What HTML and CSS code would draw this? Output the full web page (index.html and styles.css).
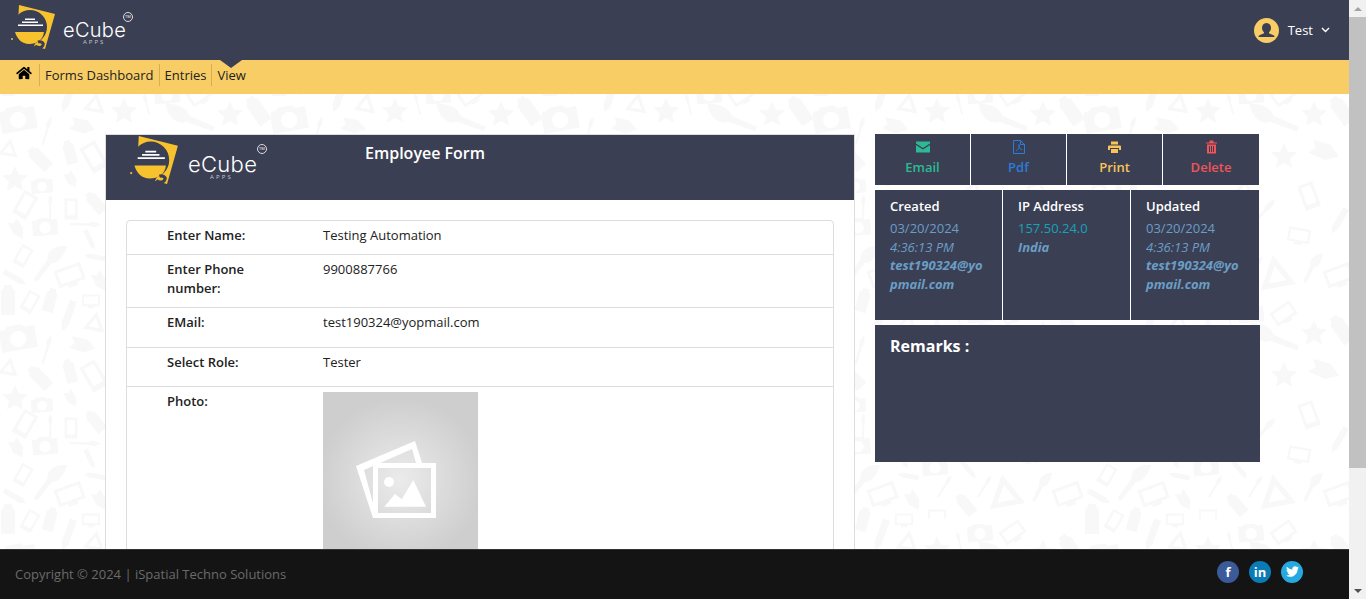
FILE: index.html
```html
<!DOCTYPE html>
<html>
<head>
  <title>eCube Apps - View Entry</title>
  <link rel="stylesheet" href="styles.css">
</head>
<body>
  <svg class="doodles" width="100%" height="100%" aria-hidden="true">
    <defs>
      <path id="d-camera" fill-rule="evenodd" d="M-18-10h6l3-3h14l3 3h10v22h-36zM0-7a8 8 0 1 0 .01 0z"/>
      <path id="d-brush" d="M-1.500 20L-1-2c-3-4-1-10 2-14 3 4 3 10 1 14L1.500 20z"/>
      <path id="d-bigbrush" d="M-3 20L-3-2c-5-5-2-15 8-20 2 10 3 16-3 21L1 20z"/>
      <path id="d-pencil" d="M-4-18h8v28l-4 8-4-8z"/>
      <path id="d-triangle" fill-rule="evenodd" d="M0-20L20 16H-20zM0-8L-10 10H10z"/>
      <path id="d-nib" d="M-14-7L4-8 16 0 4 8-14 7l5-7z"/>
      <path id="d-star" d="M0-13l3.800 8.500 9.200 1-6.900 6.200 2 9.100L0 7l-8.100 4.800 2-9.100L-13-3.500l9.200-1z"/>
      <path id="d-monitor" fill-rule="evenodd" d="M-14-10h28v18H-14zM-11-7v12h22V-7zM-5 8h10v3H-5z"/>
      <path id="d-phone" fill-rule="evenodd" d="M-8-13H8v26H-8zM-5-10v18H5v-18z"/>
      <path id="d-can" d="M-7-10l3-3v-3h8v3l3 3v24H-7z"/>
      <pattern id="doodle" width="271" height="219" patternUnits="userSpaceOnUse" patternTransform="translate(0 81)">
        <g fill="#f8f8f8">
          <use href="#d-camera" transform="translate(18 38) rotate(-10)"/>
          <use href="#d-brush" transform="translate(47 48) rotate(15) scale(.8)"/>
          <use href="#d-pencil" transform="translate(68 16) rotate(20) scale(.9)"/>
          <use href="#d-triangle" transform="translate(95 22) rotate(10) scale(.55)"/>
          <use href="#d-nib" transform="translate(82 45) rotate(15) scale(.85)"/>
          <use href="#d-star" transform="translate(124 30)"/>
          <use href="#d-brush" transform="translate(146 22) rotate(-15) scale(.6)"/>
          <use href="#d-bigbrush" transform="translate(190 38) rotate(-70) scale(1.300)"/>
          <use href="#d-star" transform="translate(230 33)"/>
          <use href="#d-can" transform="translate(258 30) rotate(-35)"/>
          <use href="#d-camera" transform="translate(167 14) rotate(-5) scale(.7)"/>
          <use href="#d-monitor" transform="translate(200 14) rotate(-35) scale(.85)"/>
          <use href="#d-triangle" transform="translate(9 67) rotate(10) scale(.5)"/>
          <use href="#d-can" transform="translate(40 78) rotate(-45) scale(.9)"/>
          <use href="#d-can" transform="translate(70 72) rotate(-15) scale(.8)"/>
          <use href="#d-phone" transform="translate(94 76) rotate(-30) scale(1.100)"/>
          <use href="#d-star" transform="translate(15 98)"/>
          <use href="#d-camera" transform="translate(42 105) rotate(-5) scale(.6)"/>
          <use href="#d-nib" transform="translate(71 98) rotate(60) scale(.6)"/>
          <use href="#d-phone" transform="translate(25 124) rotate(30)"/>
          <use href="#d-brush" transform="translate(50 125) scale(.7)"/>
          <use href="#d-phone" transform="translate(71 128) scale(.8)"/>
          <use href="#d-can" transform="translate(96 122) rotate(-40) scale(.8)"/>
          <use href="#d-nib" transform="translate(17 148) rotate(60) scale(.7)"/>
          <use href="#d-camera" transform="translate(45 146) rotate(-5) scale(.7)"/>
          <use href="#d-brush" transform="translate(87 143) rotate(90) scale(.85)"/>
          <use href="#d-pencil" transform="translate(90 159) rotate(-25) scale(.6)"/>
          <use href="#d-phone" transform="translate(23 175) rotate(30) scale(.8)"/>
          <use href="#d-bigbrush" transform="translate(49 182) rotate(35) scale(1.100)"/>
          <use href="#d-pencil" transform="translate(95 176) rotate(100) scale(.6)"/>
          <use href="#d-pencil" transform="translate(15 197) rotate(-60) scale(.7)"/>
          <use href="#d-monitor" transform="translate(70 195) rotate(-20)"/>
          <use href="#d-nib" transform="translate(100 200) rotate(60) scale(.7)"/>
          <use href="#d-can" transform="translate(8 220)"/>
          <use href="#d-can" transform="translate(8 1)"/>
          <use href="#d-phone" transform="translate(30 221) rotate(30) scale(.8)"/>
          <use href="#d-phone" transform="translate(30 2) rotate(30) scale(.8)"/>
          <use href="#d-can" transform="translate(50 220) rotate(15) scale(.8)"/>
          <use href="#d-can" transform="translate(50 1) rotate(15) scale(.8)"/>
          <use href="#d-monitor" transform="translate(91 220) scale(.65)"/>
          <use href="#d-monitor" transform="translate(91 1) scale(.65)"/>
          <use href="#d-camera" transform="translate(122 167) rotate(-5) scale(.7)"/>
          <use href="#d-brush" transform="translate(132 185) rotate(30) scale(.7)"/>
          <use href="#d-brush" transform="translate(172 185) rotate(30) scale(.7)"/>
          <use href="#d-pencil" transform="translate(156 170) rotate(-40) scale(.6)"/>
          <use href="#d-can" transform="translate(153 205) rotate(-40) scale(.8)"/>
          <use href="#d-triangle" transform="translate(192 192) rotate(-10) scale(.9)"/>
          <use href="#d-bigbrush" transform="translate(228 187) rotate(25) scale(.8)"/>
          <use href="#d-monitor" transform="translate(255 195) rotate(-20)"/>
          <use href="#d-monitor" transform="translate(124 216) scale(.65)"/>
          <use href="#d-camera" transform="translate(130 80) rotate(8) scale(.8)"/>
          <use href="#d-triangle" transform="translate(160 110) rotate(15) scale(.7)"/>
          <use href="#d-star" transform="translate(200 75)"/>
          <use href="#d-nib" transform="translate(240 70) rotate(20)"/>
          <use href="#d-brush" transform="translate(180 130) rotate(40)"/>
          <use href="#d-phone" transform="translate(225 115) rotate(-20)"/>
          <use href="#d-can" transform="translate(130 130) rotate(20) scale(.8)"/>
          <use href="#d-pencil" transform="translate(255 140) rotate(30) scale(.8)"/>
          <use href="#d-monitor" transform="translate(215 155) rotate(10) scale(.8)"/>
          <use href="#d-nib" transform="translate(145 155) rotate(50) scale(.7)"/>
        </g>
      </pattern>
    </defs>
    <rect width="100%" height="100%" fill="url(#doodle)"/>
  </svg>

  <header class="topbar">
    <a class="brand">
      <svg class="brand-mark" width="46" height="46" viewBox="0 0 46 46">
        <path d="M9 1l36 9-10 35-11-3 6-12L8 20z" fill="#f8c22e"/>
        <circle cx="20" cy="23" r="17" fill="#3b3f54"/>
        <path d="M5 28h29c-1 8-7 12-15 12-7 0-12-5-14-12z" fill="#f8c22e"/>
        <path d="M25 42c3 2 7 2 8-1 1-2-2-4-5-3" fill="none" stroke="#3b3f54" stroke-width="3"/>
        <path d="M15 14.500h10v1.500H15zM12 17.500h16V19H12zM8 20.500h25V22H8z" fill="#fff"/>
        <circle cx="2" cy="35" r="1" fill="#f8c22e"/>
      </svg>
      <span class="brand-text">
        <span class="brand-name">eCube</span>
        <span class="brand-apps">APPS</span>
        <span class="brand-tm">TM</span>
      </span>
    </a>
    <div class="user">
      <svg class="user-pic" width="25" height="25" viewBox="0 0 25 25">
        <circle cx="12.500" cy="12.500" r="12.500" fill="#f8cd66"/>
        <path d="M12.500 5c3 0 4.500 2.200 4.500 4.800 0 2-1 3.600-2 4.500v1l4.500 2c.7.300 1 .8 1 1.700H4.500c0-.9.300-1.400 1-1.700l4.500-2v-1c-1-.9-2-2.500-2-4.500C8 7.200 9.500 5 12.500 5z" fill="#3b3f54"/>
      </svg>
      <span class="user-name">Test</span>
      <svg class="user-caret" width="9" height="6" viewBox="0 0 9 6"><path d="M1 1l3.500 3.500L8 1" fill="none" stroke="#fff" stroke-width="1.400"/></svg>
    </div>
  </header>

  <nav class="crumbs">
    <a class="crumb crumb-home">
      <svg width="16" height="14" viewBox="0 0 576 512"><path d="M280.370 148.260L96 300.110V464a16 16 0 0 0 16 16l112.060-.29a16 16 0 0 0 15.920-16V368a16 16 0 0 1 16-16h64a16 16 0 0 1 16 16v95.640a16 16 0 0 0 16 16.050L464 480a16 16 0 0 0 16-16V300L295.670 148.260a12.190 12.190 0 0 0-15.300 0zM571.600 251.470L488 182.560V44.050a12 12 0 0 0-12-12h-56a12 12 0 0 0-12 12v72.610L318.470 43a48 48 0 0 0-61 0L4.340 251.470a12 12 0 0 0-1.600 16.900l25.500 31A12 12 0 0 0 45.150 301l235.220-193.740a12.190 12.190 0 0 1 15.300 0L530.900 301a12 12 0 0 0 16.900-1.600l25.500-31a12 12 0 0 0-1.700-16.930z"/></svg>
    </a>
    <a class="crumb">Forms Dashboard</a>
    <a class="crumb">Entries</a>
    <a class="crumb crumb-active">View</a>
  </nav>

  <main class="page">
    <section class="form-card">
      <div class="form-head">
        <a class="brand brand-large">
          <svg class="brand-mark" width="50" height="50" viewBox="0 0 46 46">
            <path d="M9 1l36 9-10 35-11-3 6-12L8 20z" fill="#f8c22e"/>
            <circle cx="20" cy="23" r="17" fill="#3b3f54"/>
            <path d="M5 28h29c-1 8-7 12-15 12-7 0-12-5-14-12z" fill="#f8c22e"/>
            <path d="M25 42c3 2 7 2 8-1 1-2-2-4-5-3" fill="none" stroke="#3b3f54" stroke-width="3"/>
            <path d="M15 14.500h10v1.500H15zM12 17.500h16V19H12zM8 20.500h25V22H8z" fill="#fff"/>
            <circle cx="2" cy="35" r="1" fill="#f8c22e"/>
          </svg>
          <span class="brand-text">
            <span class="brand-name">eCube</span>
            <span class="brand-apps">APPS</span>
            <span class="brand-tm">TM</span>
          </span>
        </a>
        <h1 class="form-title">Employee Form</h1>
      </div>
      <div class="form-body">
        <div class="fields">
          <div class="field field-name">
            <div class="field-label">Enter Name:</div>
            <div class="field-value">Testing Automation</div>
          </div>
          <div class="field field-phone">
            <div class="field-label">Enter Phone number:</div>
            <div class="field-value">9900887766</div>
          </div>
          <div class="field field-mail">
            <div class="field-label">EMail:</div>
            <div class="field-value">test190324@yopmail.com</div>
          </div>
          <div class="field field-role">
            <div class="field-label">Select Role:</div>
            <div class="field-value">Tester</div>
          </div>
          <div class="field field-photo">
            <div class="field-label">Photo:</div>
            <div class="photo">
              <svg width="80" height="78" viewBox="0 0 80 78">
                <path d="M0 25L59 0l7 22h-6L56 8 8 29l9 33v15z" fill="#fff"/>
                <path d="M17 22h63v55H17zM22 27v45h53V27z" fill="#fff" fill-rule="evenodd"/>
                <circle cx="33" cy="41" r="5" fill="#fff"/>
                <path d="M28.300 65.700L39 53l6.700 5.300L57.300 39 70 65.700z" fill="#fff"/>
              </svg>
            </div>
          </div>
        </div>
      </div>
    </section>

    <aside class="side">
      <div class="actions">
        <a class="action action-email">
          <svg width="14" height="11" viewBox="0 0 14 11"><path d="M0 0h14v2L7 6.500 0 2zM0 3.500L7 8l7-4.500V11H0z" fill="currentColor"/></svg>
          <span>Email</span>
        </a>
        <a class="action action-pdf">
          <svg width="12" height="14" viewBox="0 0 12 14"><path d="M.5.500h7l4 4v9H.5zM7.500.500v4h4M3 11c2-1 4-4 3-6.500C5.500 7 7 10 9.500 9.500" fill="none" stroke="currentColor"/></svg>
          <span>Pdf</span>
        </a>
        <a class="action action-print">
          <svg width="13" height="12" viewBox="0 0 13 12"><path d="M3 .5h7v3H3zM1 4.500h11a1 1 0 0 1 1 1V9h-2V7H2v2H0V5.500a1 1 0 0 1 1-1zM3 8h7v4H3z" fill="currentColor"/></svg>
          <span>Print</span>
        </a>
        <a class="action action-delete">
          <svg width="11" height="13" viewBox="0 0 11 13"><path d="M4 0h3l1 2h3v1H0V2h3zM1 4h9v9H1zM3 5.500v6h1v-6zM5 5.500v6h1v-6zM7 5.500v6h1v-6z" fill="currentColor" fill-rule="evenodd"/></svg>
          <span>Delete</span>
        </a>
      </div>

      <div class="meta">
        <div class="meta-col">
          <h4 class="meta-title">Created</h4>
          <div class="meta-date">03/20/2024</div>
          <div class="meta-time">4:36:13 PM</div>
          <div class="meta-user">test190324@yopmail.com</div>
        </div>
        <div class="meta-col">
          <h4 class="meta-title">IP Address</h4>
          <div class="meta-ip">157.50.24.0</div>
          <div class="meta-user">India</div>
        </div>
        <div class="meta-col">
          <h4 class="meta-title">Updated</h4>
          <div class="meta-date">03/20/2024</div>
          <div class="meta-time">4:36:13 PM</div>
          <div class="meta-user">test190324@yopmail.com</div>
        </div>
      </div>

      <div class="remarks">
        <h3 class="remarks-title">Remarks :</h3>
      </div>
    </aside>
  </main>

  <footer class="footer">
    <span class="copyright">Copyright © 2024 | iSpatial Techno Solutions</span>
    <div class="social">
      <a class="social-link social-fb">f</a>
      <a class="social-link social-in">in</a>
      <a class="social-link social-tw">
        <svg width="13" height="13" viewBox="0 0 512 512"><path fill="#fff" d="M459.370 151.716c.325 4.548.325 9.097.325 13.645 0 138.720-105.583 298.558-298.558 298.558-59.452 0-114.680-17.219-161.137-47.106 8.447.974 16.568 1.299 25.340 1.299 49.055 0 94.213-16.568 130.274-44.832-46.132-.975-84.792-31.188-98.112-72.772 6.498.974 12.995 1.624 19.818 1.624 9.421 0 18.843-1.300 27.614-3.573-48.081-9.747-84.143-51.980-84.143-102.985v-1.299c13.969 7.797 30.214 12.670 47.431 13.319-28.264-18.843-46.781-51.005-46.781-87.391 0-19.492 5.197-37.360 14.294-52.954 51.655 63.675 129.300 105.258 216.365 109.807-1.624-7.797-2.599-15.918-2.599-24.040 0-57.828 46.782-104.934 104.934-104.934 30.213 0 57.502 12.670 76.670 33.137 23.715-4.548 46.456-13.320 66.599-25.340-7.798 23.715-24.366 43.534-46.132 56.853 21.117-2.273 41.584-8.122 60.426-16.243-14.292 20.791-32.161 39.308-52.628 54.253z"/></svg>
      </a>
    </div>
  </footer>

  <div class="scrollbar">
    <span class="scroll-up"></span>
    <span class="scroll-thumb"></span>
    <span class="scroll-down"></span>
  </div>
</body>
</html>
```

FILE: styles.css
```css
html {
  overflow: hidden;
}

body {
  margin: 0;
  position: relative;
  height: 100vh;
  padding-right: 17px;
  box-sizing: border-box;
  overflow: hidden;
  font-family: "Open Sans", sans-serif;
  font-size: 13px;
  color: #222;
  background-color: #fff;
}

.doodles {
  position: absolute;
  top: 0;
  left: 0;
  z-index: -1;
}

.topbar {
  height: 60px;
  display: flex;
  justify-content: space-between;
  align-items: center;
  padding: 0 19px 0 10px;
  background-color: #3b3f54;
}

.topbar .brand {
  margin-bottom: 6px;
}

.brand {
  display: flex;
  align-items: center;
}

.brand-text {
  position: relative;
  display: block;
  width: 80px;
  height: 46px;
  margin-left: 7px;
  color: #fff;
}

.brand-name {
  position: absolute;
  left: 0;
  top: 18px;
  font-family: "Inter", sans-serif;
  font-size: 20px;
  font-weight: 300;
  line-height: 16px;
  letter-spacing: 0.3px;
}

.brand-apps {
  position: absolute;
  left: 20px;
  top: 35px;
  font-size: 6px;
  line-height: 6px;
  letter-spacing: 2px;
  color: #c8c9d0;
}

.brand-tm {
  position: absolute;
  left: 60px;
  top: 8px;
  width: 8px;
  height: 8px;
  border: 1px solid #ddd;
  border-radius: 50%;
  font-size: 4px;
  line-height: 8px;
  text-align: center;
}

.brand-large {
  padding-left: 23px;
}

.brand-large .brand-text {
  height: 50px;
  margin-left: 9px;
}

.brand-large .brand-name {
  top: 20px;
  font-size: 22px;
  line-height: 18px;
}

.brand-large .brand-apps {
  left: 22px;
  top: 39px;
  letter-spacing: 2.2px;
}

.brand-large .brand-tm {
  left: 69px;
  top: 9px;
}

.user {
  display: flex;
  align-items: center;
  color: #fff;
}

.user-name {
  margin-left: 9px;
  font-size: 13px;
}

.user-caret {
  margin-left: 8px;
}

.crumbs {
  height: 34px;
  display: flex;
  align-items: center;
  padding: 0 0 4px 16px;
  box-sizing: border-box;
  background-color: #f8cd66;
  color: #222;
}

.crumb {
  height: 22px;
  line-height: 22px;
  padding: 0 5px;
  border-left: 1px solid #d8ad50;
}

.crumb-home {
  padding: 0 7px 0 0;
  border-left: 0;
}

.crumb-active {
  position: relative;
}

.crumb-active::before {
  content: "";
  position: absolute;
  left: 8px;
  top: -4px;
  border-left: 11px solid transparent;
  border-right: 11px solid transparent;
  border-top: 8px solid #3b3f54;
}

.page {
  display: grid;
  grid-template-columns: 750px 385px;
  gap: 20px;
  align-items: start;
  padding: 40px 0 40px 105px;
}

.form-card {
  background-color: #fff;
  border: 1px solid #ddd;
  border-bottom: 0;
}

.form-head {
  height: 65px;
  display: flex;
  align-items: flex-start;
  background-color: #3b3f54;
}

.form-title {
  margin: 7px 0 0 97px;
  font-size: 16px;
  font-weight: 600;
  line-height: 22px;
  color: #fff;
}

.form-body {
  padding: 20px;
}

.fields {
  border: 1px solid #ddd;
  border-radius: 4px;
}

.field {
  display: grid;
  grid-template-columns: 156px 1fr;
  padding: 5px 0 0 40px;
  box-sizing: border-box;
  border-bottom: 1px solid #ddd;
  line-height: 19px;
}

.field:last-child {
  border-bottom: 0;
}

.field-name {
  height: 34px;
}

.field-phone {
  height: 53px;
}

.field-mail {
  height: 40px;
}

.field-role {
  height: 39px;
}

.field-label {
  font-weight: 600;
  padding-right: 60px;
}

.field-photo .field-label {
  padding-right: 0;
}

.photo {
  width: 155px;
  height: 175px;
  margin-bottom: 5px;
  display: flex;
  align-items: center;
  justify-content: center;
  padding-right: 9px;
  box-sizing: border-box;
  background: radial-gradient(circle at 50% 50%, #ebebeb 0, #cecece 70%);
}

.side {
  display: flex;
  flex-direction: column;
  gap: 5px;
}

.actions {
  display: grid;
  grid-template-columns: repeat(4, 1fr);
  width: 384px;
  height: 51px;
  background-color: #3b3f54;
}

.action {
  display: flex;
  flex-direction: column;
  align-items: center;
  padding-top: 6px;
  box-sizing: border-box;
  font-weight: 600;
  border-right: 1px solid #fff;
}

.action:last-child {
  border-right: 0;
}

.action svg {
  height: 14px;
}

.action span {
  margin-top: 4px;
  line-height: 18px;
}

.action-email {
  color: #2cb993;
}

.action-pdf {
  color: #2d7bd8;
}

.action-print {
  color: #f8c45a;
}

.action-delete {
  color: #f0555a;
}

.meta {
  display: grid;
  grid-template-columns: 128px 128px 128px;
  width: 384px;
  height: 130px;
  background-color: #3b3f54;
}

.meta-col {
  padding: 7px 15px;
  box-sizing: border-box;
  border-right: 1px solid #fff;
  color: #6a9ec5;
  line-height: 19px;
  overflow-wrap: anywhere;
}

.meta-col:last-child {
  border-right: 0;
}

.meta-title {
  margin: 0 0 3px;
  font-size: 13px;
  font-weight: 600;
  color: #fff;
}

.meta-ip {
  color: #17a2b8;
}

.meta-time {
  font-style: italic;
}

.meta-user {
  margin-top: -1px;
  font-style: italic;
  font-weight: 700;
}

.meta-ip + .meta-user {
  margin-top: 0;
}

.remarks {
  height: 137px;
  padding: 9px 15px;
  box-sizing: border-box;
  background-color: #3b3f54;
}

.remarks-title {
  margin: 0;
  font-size: 16px;
  font-weight: 700;
  line-height: 24px;
  color: #fff;
}

.footer {
  position: fixed;
  left: 0;
  right: 17px;
  bottom: 0;
  height: 50px;
  display: flex;
  justify-content: space-between;
  align-items: center;
  padding: 0 46px 0 15px;
  box-sizing: border-box;
  background-color: #141414;
  border-top: 1px solid #333;
}

.copyright {
  margin-bottom: 2px;
  color: #6b6b6b;
}

.social {
  display: flex;
  gap: 10px;
  margin-bottom: 6px;
}

.social-link {
  width: 22px;
  height: 22px;
  display: flex;
  align-items: center;
  justify-content: center;
  border-radius: 50%;
  color: #fff;
  font-size: 13px;
  font-weight: 700;
  line-height: 22px;
}

.social-fb {
  background-color: #3b5a9a;
}

.social-in {
  background-color: #0b7bb5;
}

.social-tw {
  background-color: #26a9e0;
}

/* the window's own scrollbar, the shot is taken with it showing */
.scrollbar {
  position: fixed;
  top: 0;
  right: 0;
  bottom: 0;
  width: 17px;
  display: flex;
  flex-direction: column;
  background-color: #f1f1f1;
}

.scroll-up,
.scroll-down {
  height: 17px;
  flex: none;
  display: flex;
  align-items: center;
  justify-content: center;
}

.scroll-up::before,
.scroll-down::before {
  content: "";
  border-left: 4px solid transparent;
  border-right: 4px solid transparent;
}

.scroll-up::before {
  border-bottom: 4px solid #a3a3a3;
}

.scroll-down {
  margin-top: auto;
}

.scroll-down::before {
  border-top: 4px solid #505050;
}

.scroll-thumb {
  height: 451px;
  flex: none;
  background-color: #c1c1c1;
}
```
